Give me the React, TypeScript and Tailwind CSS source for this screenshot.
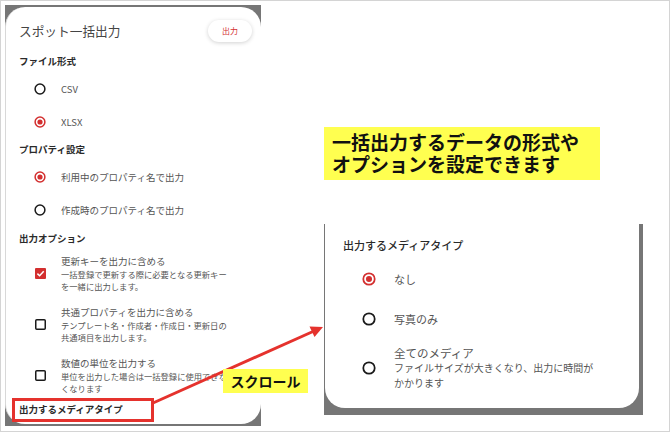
import React from 'react';

const jp = "font-['Noto_Sans_CJK_JP','Noto_Sans',sans-serif]";

function Radio({ checked, size = 10 }: { checked?: boolean; size?: number }) {
  return (
    <svg width={size + 2} height={size + 2} viewBox="0 0 12 12" className="shrink-0">
      <circle cx="6" cy="6" r="4.9" fill="none" stroke={checked ? '#d32f2f' : '#1a1a1a'} strokeWidth="1.5" />
      {checked && <circle cx="6" cy="6" r="2.6" fill="#d32f2f" />}
    </svg>
  );
}

function Check({ checked }: { checked?: boolean }) {
  return (
    <svg width="11" height="11" viewBox="0 0 11 11" className="shrink-0">
      {checked ? (
        <>
          <rect x="0" y="0" width="11" height="11" rx="1" fill="#d32f2f" />
          <path d="M2.4 5.6 L4.6 7.7 L8.7 3.3" fill="none" stroke="#fff" strokeWidth="1.5" />
        </>
      ) : (
        <rect x="0.75" y="0.75" width="9.5" height="9.5" rx="1" fill="none" stroke="#1a1a1a" strokeWidth="1.5" />
      )}
    </svg>
  );
}

function Heading({ children, className = '' }: { children: React.ReactNode; className?: string }) {
  return (
    <div className={`h-[12px] flex items-center pl-[13px] text-[9.5px] font-bold text-[#2a2a2a] ${className}`}>
      {children}
    </div>
  );
}

function RadioRow({ label, checked, className = '' }: { label: string; checked?: boolean; className?: string }) {
  return (
    <div className={`h-[22px] flex items-center pl-[28px] ${className}`}>
      <Radio checked={checked} />
      <span className="ml-[15px] text-[9.5px] text-[#555]">{label}</span>
    </div>
  );
}

function CheckRow({ title, desc, checked, className = '' }: { title: string; desc: React.ReactNode; checked?: boolean; className?: string }) {
  return (
    <div className={`flex items-center pl-[29px] ${className}`}>
      <Check checked={checked} />
      <div className="ml-[15px]">
        <div className="text-[9.5px] leading-[13px] text-[#555]">{title}</div>
        <div className="text-[8.3px] leading-[12px] text-[#555]">{desc}</div>
      </div>
    </div>
  );
}

export default function App() {
  return (
    <div className={`relative w-[670px] h-[432px] bg-white border border-[#d4d4d4] overflow-hidden ${jp}`}>
      <div className="flex h-full">
        {/* Left sheet */}
        <div className="ml-[4px] mt-[4px] w-[256px] h-[421px] bg-[#767676] py-[2px]">
          <div className="h-full bg-white rounded-[20px] border-l border-[#d8d8d8] flex flex-col">
            <div className="h-[48px] flex items-center justify-between pl-[13px] pr-[9px]">
              <span className="text-[12.7px] text-[#444]">スポット一括出力</span>
              <button className="w-[44px] h-[22px] rounded-full bg-white shadow-[0_1px_4px_rgba(0,0,0,0.18)] text-[8px] text-[#d32f2f]">
                出力
              </button>
            </div>
            <Heading>ファイル形式</Heading>
            <RadioRow label="CSV" className="mt-[11px]" />
            <RadioRow label="XLSX" checked className="mt-[11px]" />
            <Heading className="mt-[10px]">プロパティ設定</Heading>
            <RadioRow label="利用中のプロパティ名で出力" checked className="mt-[11px]" />
            <RadioRow label="作成時のプロパティ名で出力" className="mt-[11px]" />
            <Heading className="mt-[11px]">出力オプション</Heading>
            <CheckRow
              checked
              className="mt-[11px]"
              title="更新キーを出力に含める"
              desc={<>一括登録で更新する際に必要となる更新キー<br />を一緒に出力します。</>}
            />
            <CheckRow
              className="mt-[14px]"
              title="共通プロパティを出力に含める"
              desc={<>テンプレート名・作成者・作成日・更新日の<br />共通項目を出力します。</>}
            />
            <CheckRow
              className="mt-[14px]"
              title="数値の単位を出力する"
              desc={<>単位を出力した場合は一括登録に使用できな<br />くなります</>}
            />
            <Heading className="mt-[9px]">出力するメディアタイプ</Heading>
          </div>
        </div>

        {/* Right sheet (scrolled view) */}
        <div className="ml-[63px] mt-[223px] w-[319px] h-[191px] bg-[#767676] pl-[1px] pr-[4px] pb-[7px]">
          <div className="h-full bg-white rounded-b-[20px] flex flex-col">
            <div className="h-[18px] mt-[12px] flex items-center pl-[18px] text-[11px] font-medium text-[#2a2a2a]">
              出力するメディアタイプ
            </div>
            <div className="h-[24px] mt-[13px] flex items-center pl-[37px]">
              <Radio checked size={12} />
              <span className="ml-[18px] text-[11px] text-[#555]">なし</span>
            </div>
            <div className="h-[24px] mt-[16px] flex items-center pl-[37px]">
              <Radio size={12} />
              <span className="ml-[18px] text-[11px] text-[#555]">写真のみ</span>
            </div>
            <div className="mt-[15px] flex items-center pl-[37px]">
              <Radio size={12} />
              <div className="ml-[18px]">
                <div className="text-[11.5px] leading-[15px] text-[#555]">全てのメディア</div>
                <div className="text-[10px] leading-[14.5px] text-[#555]">
                  ファイルサイズが大きくなり、出力に時間が<br />かかります
                </div>
              </div>
            </div>
          </div>
        </div>
      </div>

      {/* Annotations */}
      <div className="absolute left-[323px] top-[126px] w-[276px] h-[53px] bg-[#ffff50] pl-[8px] pt-[4px] text-[19px] leading-[22px] font-bold text-[#111]">
        <div>一括出力するデータの形式や</div>
        <div>オプションを設定できます</div>
      </div>

      <div className="absolute left-[11px] top-[397px] w-[142px] h-[24px] border-[3px] border-[#e5322d]" />

      <svg className="absolute left-0 top-0" width="670" height="432" viewBox="0 0 670 432">
        <line x1="152" y1="402" x2="312" y2="330.5" stroke="#e5322d" strokeWidth="3" />
        <polygon points="322,326 313.5,336 308.5,325.5" fill="#e5322d" />
      </svg>

      <div className="absolute left-[222px] top-[368px] w-[85px] h-[24px] bg-[#ffff50] flex items-center justify-center text-[14px] font-bold text-[#111]">
        スクロール
      </div>
    </div>
  );
}
